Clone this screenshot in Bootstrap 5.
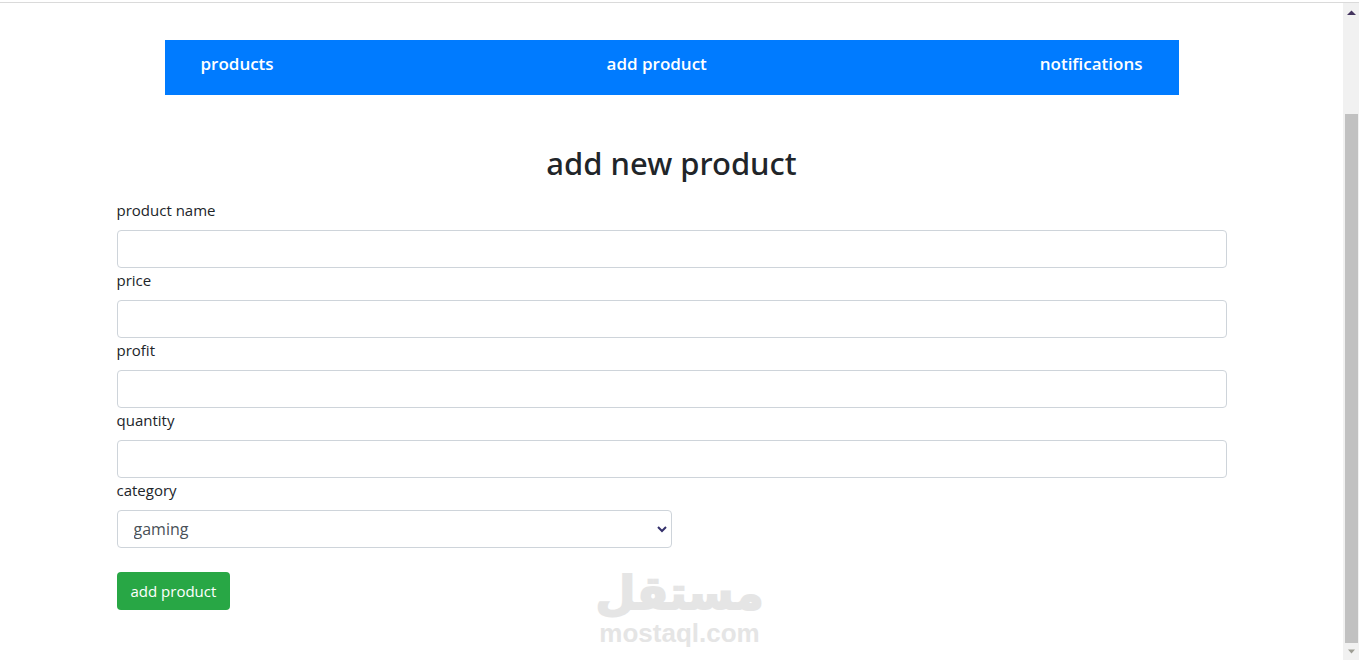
<!DOCTYPE html>
<html lang="en">
<head>
<meta charset="utf-8">
<meta name="viewport" content="width=device-width, initial-scale=1">
<title>add new product</title>
<link href="https://cdn.jsdelivr.net/npm/bootstrap@5.3.0/dist/css/bootstrap.min.css" rel="stylesheet">
<style>
  body { font-family: "Segoe UI", "Open Sans", "Noto Sans", sans-serif; font-size: 15px; line-height: 24px; color: #212529; }
  .window { border-top: 1px solid #dadada; margin-top: 2px; min-height: calc(100vh - 2px); }
  .page { max-width: 1140px; padding: 37px 15px 48px; }
  .main-nav { background: #007bff; margin: 0 48px 48px; padding: 11px 36px 18px; min-height: 55px; }
  .main-nav a { color: #fff; font-size: 17px; line-height: 26px; font-weight: 600; text-decoration: none; }
  h1 { font-family: "Segoe UI", "Noto Sans", sans-serif; font-size: 31px; line-height: 40px; font-weight: 500; margin-bottom: 15px; }
  .form-label { display: block; margin-bottom: 8px; }
  .form-control { height: 38px; border-color: #ced4da; border-radius: 4px; }
  .category { width: 50%; position: relative; }
  .category select { appearance: none; color: #495057; font-size: 16px; padding: 6px 16px; }
  .category svg { position: absolute; right: 4px; top: 13px; pointer-events: none; }
  .btn-add { background: #28a745; color: #fff; border-radius: 4px; font-size: 15px; height: 38px; padding: 6px 14px; }
  .btn-add:hover { background: #218838; color: #fff; }
  .scroll-rail { width: 16px; background: #f1f1f1; padding: 7px 1px 6px 2px; }
  .scroll-space { flex: 99 0 0; }
  .scroll-thumb { flex: 530 0 0; background: #c1c1c1; }
  .watermark { position: absolute; left: 0; right: 0; bottom: 12px; color: #e5e5e5; pointer-events: none; }
  .brand-ar { font: bold 46px/50px "DejaVu Sans", sans-serif; -webkit-text-stroke: 2px #e5e5e5; }
  .brand-en { font: bold 26px/30px "Liberation Sans", Arial, sans-serif; }
</style>
</head>
<body>
<div class="window d-flex position-relative">
  <main class="flex-grow-1">
    <div class="page mx-auto">
      <nav class="main-nav d-flex justify-content-between">
        <a href="#products">products</a>
        <a href="#add">add product</a>
        <a href="#notifications">notifications</a>
      </nav>
      <h1 class="text-center">add new product</h1>
      <form id="add">
        <label class="form-label" for="name">product name</label>
        <input class="form-control" id="name" type="text">
        <label class="form-label" for="price">price</label>
        <input class="form-control" id="price" type="text">
        <label class="form-label" for="profit">profit</label>
        <input class="form-control" id="profit" type="text">
        <label class="form-label" for="quantity">quantity</label>
        <input class="form-control" id="quantity" type="text">
        <label class="form-label" for="category">category</label>
        <div class="category mb-4">
          <select class="form-control" id="category"><option>gaming</option></select>
          <svg width="12" height="12" viewBox="0 0 12 12" aria-hidden="true"><path d="M2 4l4 4 4-4" fill="none" stroke="#34306b" stroke-width="2"/></svg>
        </div>
        <button class="btn btn-add border-0" type="submit">add product</button>
      </form>
    </div>
  </main>
  <div class="scroll-rail d-flex flex-column align-items-stretch" aria-hidden="true">
    <svg class="mx-auto" width="9" height="5" viewBox="0 0 9 5"><path d="M0 5h9L4.500 .5z" fill="#44355f"/></svg>
    <div class="scroll-space"></div>
    <div class="scroll-thumb"></div>
    <svg class="mx-auto mt-1" width="9" height="7" viewBox="0 0 9 7"><path d="M1 2.500h7L4.500 6.500z" fill="#9d9d94"/></svg>
  </div>
  <div class="watermark text-center">
    <div class="brand-ar" lang="ar" dir="rtl">مستقل</div>
    <div class="brand-en">mostaql.com</div>
  </div>
</div>
<script src="https://cdn.jsdelivr.net/npm/bootstrap@5.3.0/dist/js/bootstrap.bundle.min.js"></script>
</body>
</html>
